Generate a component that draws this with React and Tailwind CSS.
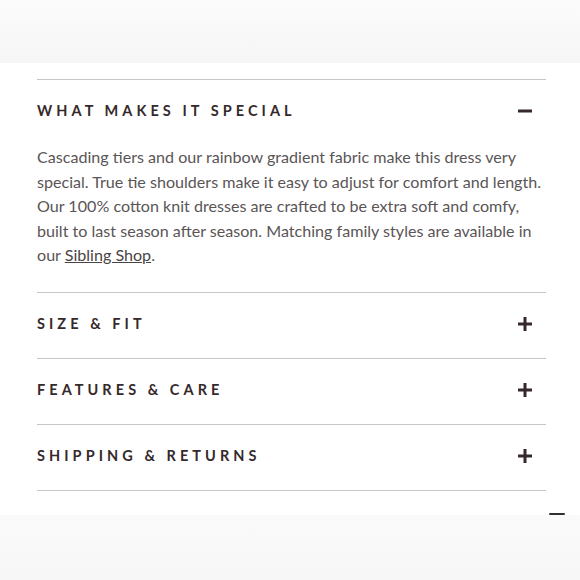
const sections = ["SIZE & FIT", "FEATURES & CARE", "SHIPPING & RETURNS"];

function Icon({ open }) {
  return (
    <svg width="15" height="14" viewBox="0 0 15 14" className="text-[#35292b]">
      <rect x="1" y="5.5" width="14" height="3" fill="currentColor" />
      {!open && <rect x="6.5" y="0" width="3" height="14" fill="currentColor" />}
    </svg>
  );
}

function Header({ title, open }) {
  return (
    <div className="h-[65px] flex items-center justify-between pr-[14px] pb-[3px]">
      <span className="text-[14.5px] font-bold tracking-[0.28em] text-[#35292b] font-['Lato',sans-serif]">
        {title}
      </span>
      <Icon open={open} />
    </div>
  );
}

export default function App() {
  return (
    <div className="w-[580px] h-[580px] bg-white overflow-hidden flex flex-col">
      <div className="h-[63px] bg-gradient-to-b from-[#fbfbfb] to-[#f6f6f6]" />
      <div className="mx-[37px] mr-[34px] mt-[16px]">
        <div className="border-t border-[#c6c6c6]">
          <Header title="WHAT MAKES IT SPECIAL" open />
          <p className="pb-[24px] text-[16.1px] leading-[24.6px] text-[#5a5556] font-['Lato',sans-serif]">
            Cascading tiers and our rainbow gradient fabric make this dress very
            special. True tie shoulders make it easy to adjust for comfort and
            length. Our 100% cotton knit dresses are crafted to be extra soft
            and comfy, built to last season after season. Matching family styles
            are available in our{" "}
            <a className="underline text-[#4a4446]">Sibling Shop</a>.
          </p>
        </div>
        {sections.map((s) => (
          <div key={s} className="border-t border-[#c6c6c6]">
            <Header title={s} />
          </div>
        ))}
        <div className="border-t border-[#c6c6c6]" />
      </div>
      <div className="mt-[24px] flex-1 bg-gradient-to-b from-[#fafafa] to-[#f7f7f7] relative">
        <div className="absolute left-[549px] top-[-2px] w-[16px] h-[2px] rounded-full bg-[#2f2f2f]" />
      </div>
    </div>
  );
}
